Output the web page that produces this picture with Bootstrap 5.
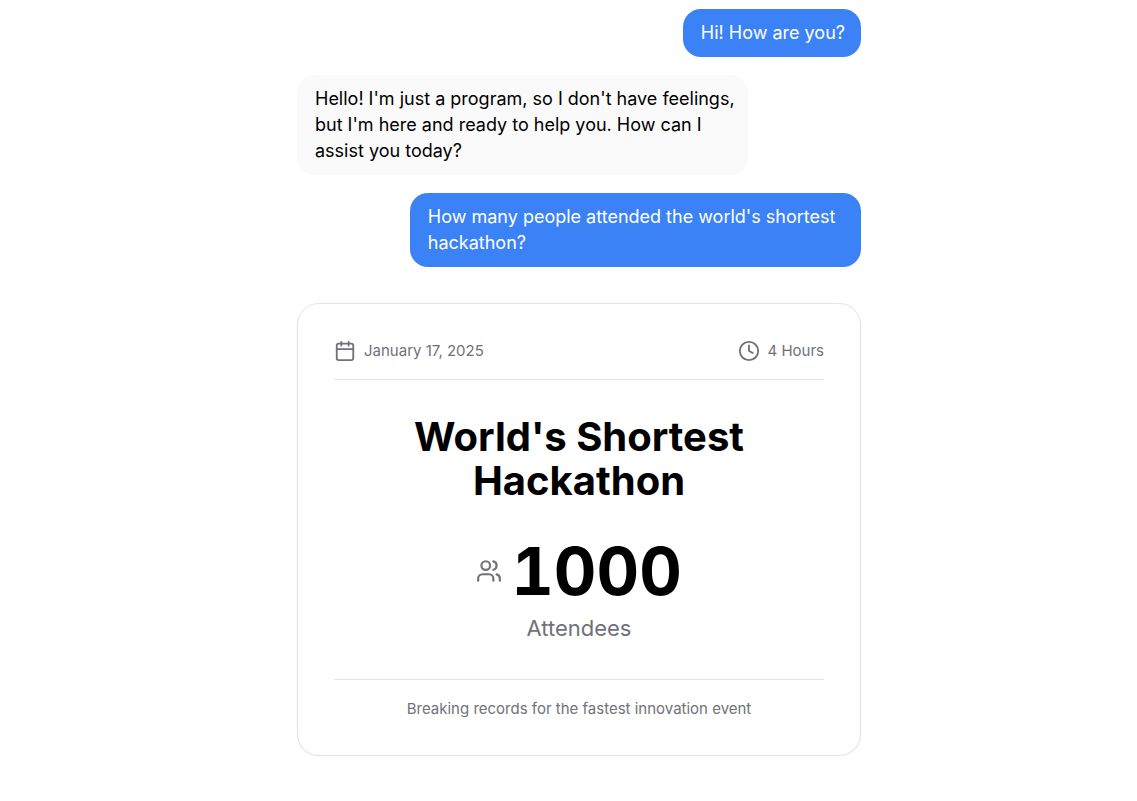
<!DOCTYPE html>
<html lang="en">
<head>
<meta charset="utf-8">
<meta name="viewport" content="width=device-width, initial-scale=1">
<title>Chat</title>
<link href="https://cdn.jsdelivr.net/npm/bootstrap@5.3.0/dist/css/bootstrap.min.css" rel="stylesheet">
<style>
  body { font-family: Inter, sans-serif; color: #000; background: #fff; padding-left: 21px; }
  .chat { max-width: 564px; padding-top: 9px; gap: 18px; }
  .bubble { max-width: 80%; padding: 11px 12px 11px 18px; border-radius: 18px; font-size: 18px; line-height: 26px; }
  .bubble-user { background: #3b82f6; color: #fff; padding-right: 16px; }
  .bubble-bot { background: #fafafa; }
  .event { margin-top: 18px; padding: 36px 36px 35px; border-radius: 22px; border-color: #e4e4e7; color: #000; box-shadow: 0 1px 2px rgba(0, 0, 0, .05); }
  .meta { font-size: 15px; line-height: 22px; color: #71717a; padding-bottom: 17px; }
  .rule-b { border-bottom: 1px solid #e4e4e7; }
  .rule-t { border-top: 1px solid #e4e4e7; }
  .event-title { font-size: 40px; line-height: 44px; font-weight: 700; margin: 35px 0; }
  .attendance { gap: 9px; }
  .count { font-size: 66px; line-height: 66px; font-weight: 700; font-variant-numeric: tabular-nums; }
  .unit { font-size: 22px; line-height: 32px; color: #71717a; margin-top: 8px; }
  .note { font-size: 15px; line-height: 22px; color: #71717a; margin-top: 35px; padding-top: 18px; }
  .icon { fill: none; stroke: #71717a; stroke-width: 2; stroke-linecap: round; stroke-linejoin: round; }
</style>
</head>
<body>
<main class="chat d-flex flex-column mx-auto">
  <div class="bubble bubble-user align-self-end">Hi! How are you?</div>
  <div class="bubble bubble-bot align-self-start">Hello! I'm just a program, so I don't have feelings, but I'm here and ready to help you. How can I assist you today?</div>
  <div class="bubble bubble-user align-self-end">How many people attended the world's shortest hackathon?</div>
  <article class="card event text-center">
    <div class="meta rule-b d-flex justify-content-between">
      <div class="d-flex align-items-center gap-2">
        <svg class="icon" width="22" height="22" viewBox="0 0 24 24" aria-hidden="true"><path d="M8 2v4M16 2v4"/><rect width="18" height="18" x="3" y="4" rx="2"/><path d="M3 10h18"/></svg>
        <span>January 17, 2025</span>
      </div>
      <div class="d-flex align-items-center gap-2">
        <svg class="icon" width="22" height="22" viewBox="0 0 24 24" aria-hidden="true"><circle cx="12" cy="12" r="10"/><path d="M12 6v6l4 2"/></svg>
        <span>4 Hours</span>
      </div>
    </div>
    <h1 class="event-title">World's Shortest Hackathon</h1>
    <div class="attendance d-flex justify-content-center align-items-center">
      <svg class="icon" width="26" height="26" viewBox="0 0 24 24" aria-hidden="true"><path d="M16 21v-2a4 4 0 0 0-4-4H6a4 4 0 0 0-4 4v2"/><circle cx="9" cy="7" r="4"/><path d="M22 21v-2a4 4 0 0 0-3-3.87M16 3.13a4 4 0 0 1 0 7.75"/></svg>
      <span class="count">1000</span>
    </div>
    <div class="unit">Attendees</div>
    <div class="note rule-t">Breaking records for the fastest innovation event</div>
  </article>
</main>
<script src="https://cdn.jsdelivr.net/npm/bootstrap@5.3.0/dist/js/bootstrap.bundle.min.js"></script>
</body>
</html>
